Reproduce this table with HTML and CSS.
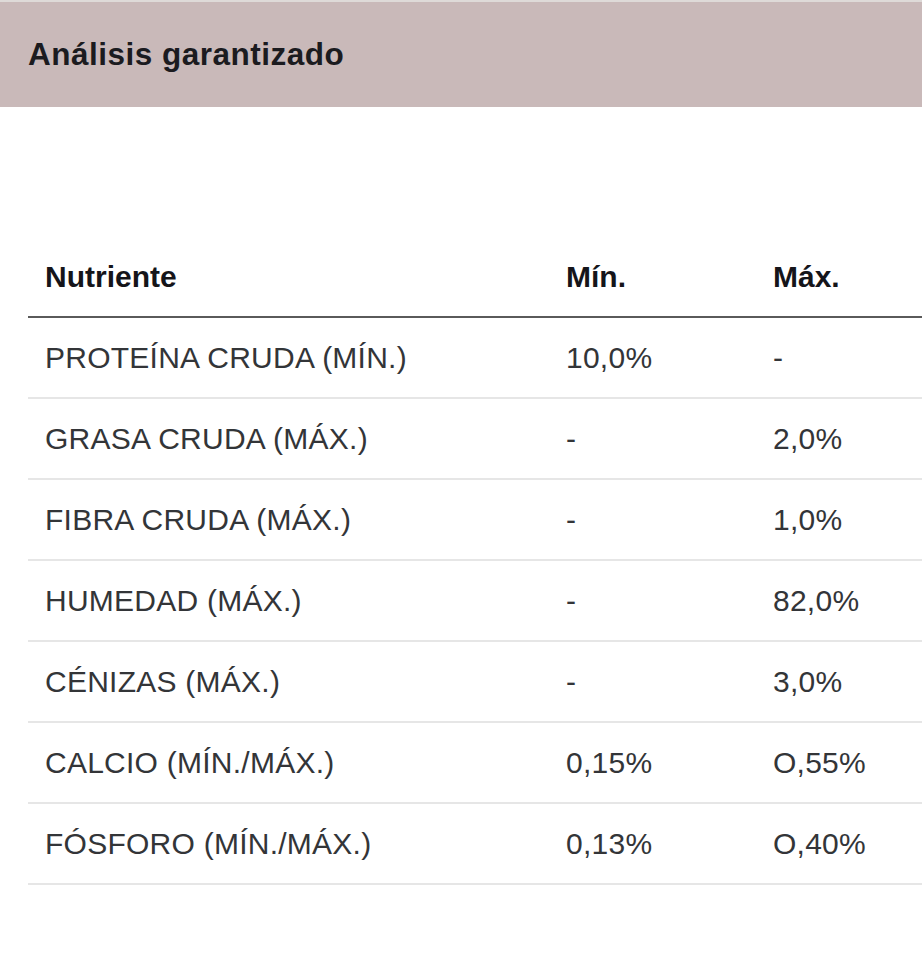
FILE: index.html
```html
<!DOCTYPE html>
<html lang="es">
<head>
<meta charset="utf-8">
<title>Análisis garantizado</title>
<link rel="stylesheet" href="styles.css">
</head>
<body>
<header class="bar">
  <h1 class="bar-title">Análisis garantizado</h1>
</header>
<main class="content">
  <table class="analysis">
    <colgroup>
      <col class="col-name">
      <col class="col-min">
      <col class="col-max">
    </colgroup>
    <thead>
      <tr><th>Nutriente</th><th>Mín.</th><th>Máx.</th></tr>
    </thead>
    <tbody>
      <tr><td>PROTEÍNA CRUDA (MÍN.)</td><td>10,0%</td><td>-</td></tr>
      <tr><td>GRASA CRUDA (MÁX.)</td><td>-</td><td>2,0%</td></tr>
      <tr><td>FIBRA CRUDA (MÁX.)</td><td>-</td><td>1,0%</td></tr>
      <tr><td>HUMEDAD (MÁX.)</td><td>-</td><td>82,0%</td></tr>
      <tr><td>CÉNIZAS (MÁX.)</td><td>-</td><td>3,0%</td></tr>
      <tr><td>CALCIO (MÍN./MÁX.)</td><td>0,15%</td><td>O,55%</td></tr>
      <tr><td>FÓSFORO (MÍN./MÁX.)</td><td>0,13%</td><td>O,40%</td></tr>
    </tbody>
  </table>
</main>
</body>
</html>
```

FILE: styles.css
```css
html, body {
  margin: 0;
  padding: 0;
  background: #ffffff;
  font-family: "Liberation Sans", Arial, sans-serif;
}

.bar {
  margin: 0;
  border-top: 2px solid #dedad8;
  background: #c9b9b9;
  height: 105px;
  display: flex;
  align-items: center;
  padding-left: 28px;
}

.bar-title {
  margin: 0;
  font-size: 31.5px;
  letter-spacing: 0.5px;
  font-weight: 700;
  color: #1b1b1f;
}

.content {
  padding: 130px 0 0 28px;
}

.analysis {
  width: 894px;
  border-collapse: collapse;
  table-layout: fixed;
}

.col-name { width: 521px; }
.col-min { width: 207px; }

.analysis th,
.analysis td {
  text-align: left;
  padding: 0 17px;
  height: 79px;
  font-size: 30px;
  vertical-align: middle;
}

.analysis th {
  font-weight: 700;
  color: #15151a;
  border-bottom: 2px solid #5a5a5a;
}

.analysis td {
  color: #333538;
  letter-spacing: 0.25px;
  border-bottom: 2px solid #e6e6e6;
}
```
